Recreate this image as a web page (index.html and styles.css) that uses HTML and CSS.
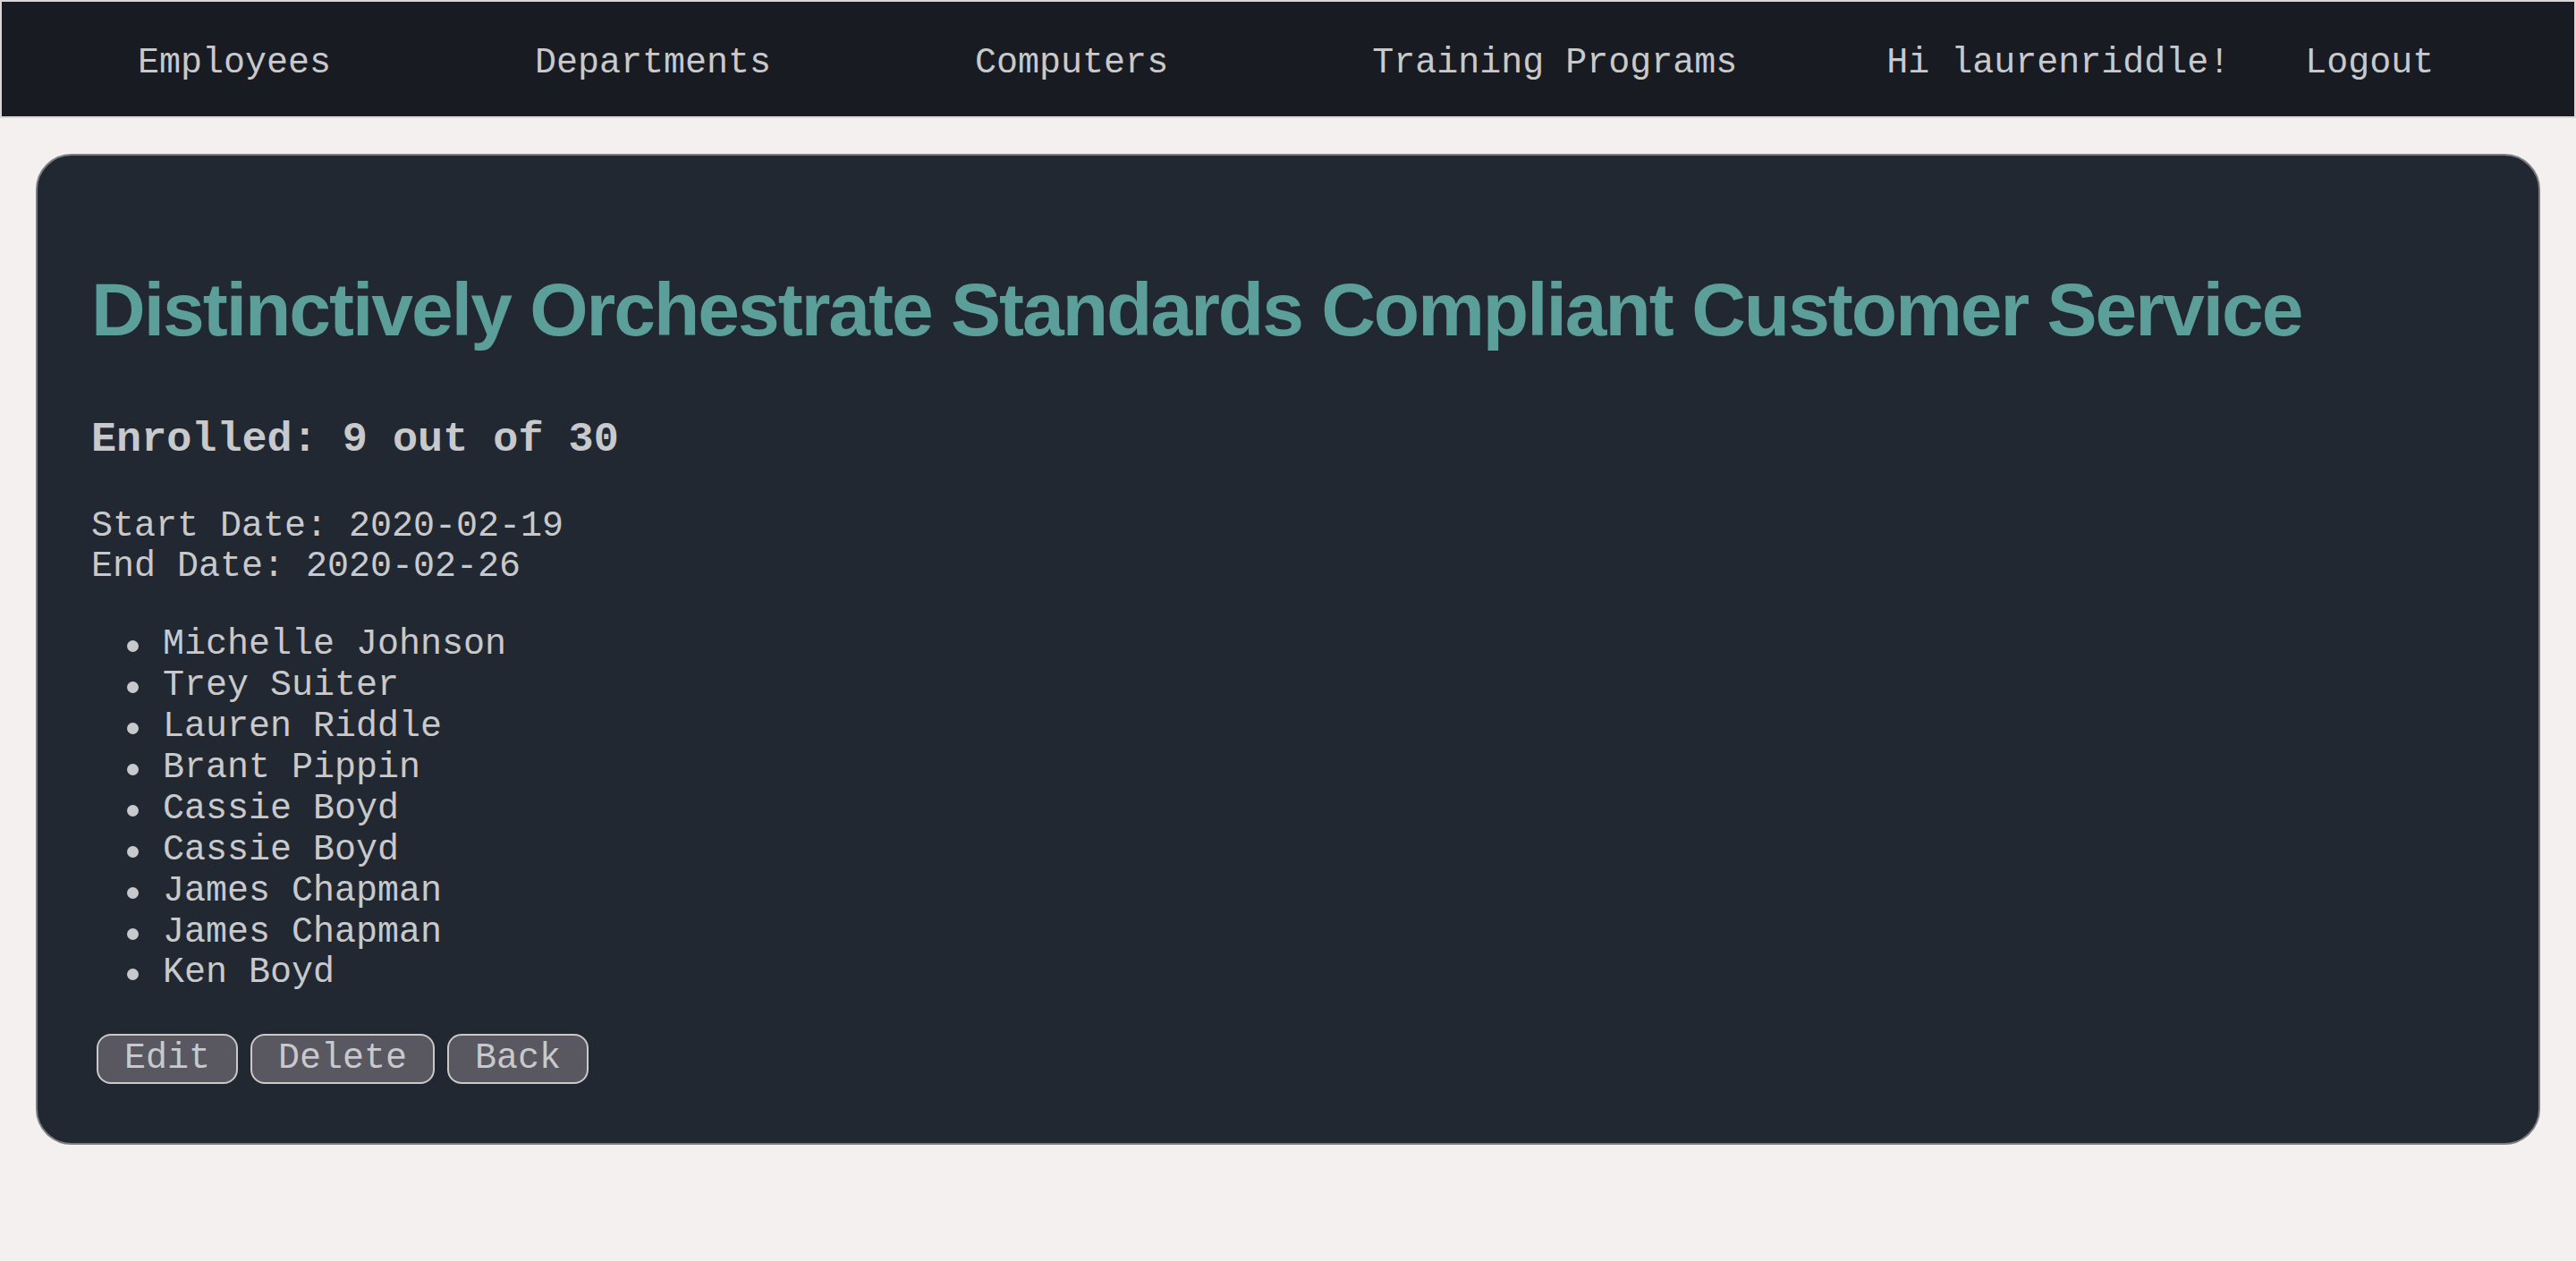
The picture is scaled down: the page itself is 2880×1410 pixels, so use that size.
FILE: index.html
```html
<!DOCTYPE html>
<html lang="en">
<head>
<meta charset="utf-8">
<title>Training Program</title>
<link rel="stylesheet" href="styles.css">
</head>
<body>
<nav class="navbar">
  <a class="nav-link" href="#">Employees</a>
  <a class="nav-link" href="#">Departments</a>
  <a class="nav-link" href="#">Computers</a>
  <a class="nav-link" href="#">Training Programs</a>
  <span class="greeting">Hi laurenriddle!</span>
  <a class="logout" href="#">Logout</a>
</nav>
<main class="card">
  <h1 class="title">Distinctively Orchestrate Standards Compliant Customer Service</h1>
  <h3 class="enrolled">Enrolled: 9 out of 30</h3>
  <p class="dates">Start Date: 2020-02-19<br>End Date: 2020-02-26</p>
  <ul class="attendees">
    <li>Michelle Johnson</li>
    <li>Trey Suiter</li>
    <li>Lauren Riddle</li>
    <li>Brant Pippin</li>
    <li>Cassie Boyd</li>
    <li>Cassie Boyd</li>
    <li>James Chapman</li>
    <li>James Chapman</li>
    <li>Ken Boyd</li>
  </ul>
  <div class="actions">
    <button class="btn">Edit</button>
    <button class="btn">Delete</button>
    <button class="btn">Back</button>
  </div>
</main>
</body>
</html>
```
FILE: styles.css
```css
html, body {
  margin: 0;
  padding: 0;
}

body {
  background: #f3f0ef;
  font-family: "Liberation Mono", "Courier New", monospace;
  font-size: 40px;
  color: #c8c9cc;
}

.navbar {
  display: flex;
  align-items: baseline;
  background: #191b22;
  border: 2px solid #d8d6d6;
  padding: 46px 0 37px 38px;
  line-height: normal;
}

.nav-link,
.logout {
  color: #c8c9cc;
  text-decoration: none;
  white-space: pre;
}

.nav-link {
  padding: 0 114px;
}

.greeting {
  margin-left: 53px;
  margin-right: 84px;
  white-space: pre;
}

.card {
  display: block;
  margin: 40px;
  background: #222831;
  border: 2px solid #7c7c7c;
  border-radius: 40px;
  padding: 60px 60px 66px;
}

.title {
  margin: 64px 0 70px;
  font-family: "Liberation Sans", Arial, Helvetica, sans-serif;
  font-weight: bold;
  font-size: 84px;
  letter-spacing: -2px;
  line-height: 1.15;
  color: #5c9e9a;
}

.enrolled {
  margin: 0 0 48px;
  font-size: 46.8px;
  font-weight: bold;
  line-height: 53px;
}

.dates {
  margin: 0 0 41px;
  line-height: 45.8px;
}

.attendees {
  margin: 0;
  padding-left: 80px;
  line-height: 45.9px;
  list-style: none;
}

.attendees li::before {
  content: "";
  display: inline-block;
  width: 13px;
  height: 13px;
  border-radius: 50%;
  background: currentColor;
  margin-left: -40px;
  margin-right: 27px;
  vertical-align: 2px;
}

.actions {
  display: flex;
  gap: 14px;
  margin-top: 45px;
  padding-left: 6px;
}

.btn {
  font-family: "Liberation Mono", "Courier New", monospace;
  font-size: 40px;
  line-height: 45.7px;
  color: #c8c9cc;
  background: #59575f;
  border: 2px solid #c9c9c9;
  border-radius: 16px;
  padding: 3px 29px;
  margin: 0;
}
```
